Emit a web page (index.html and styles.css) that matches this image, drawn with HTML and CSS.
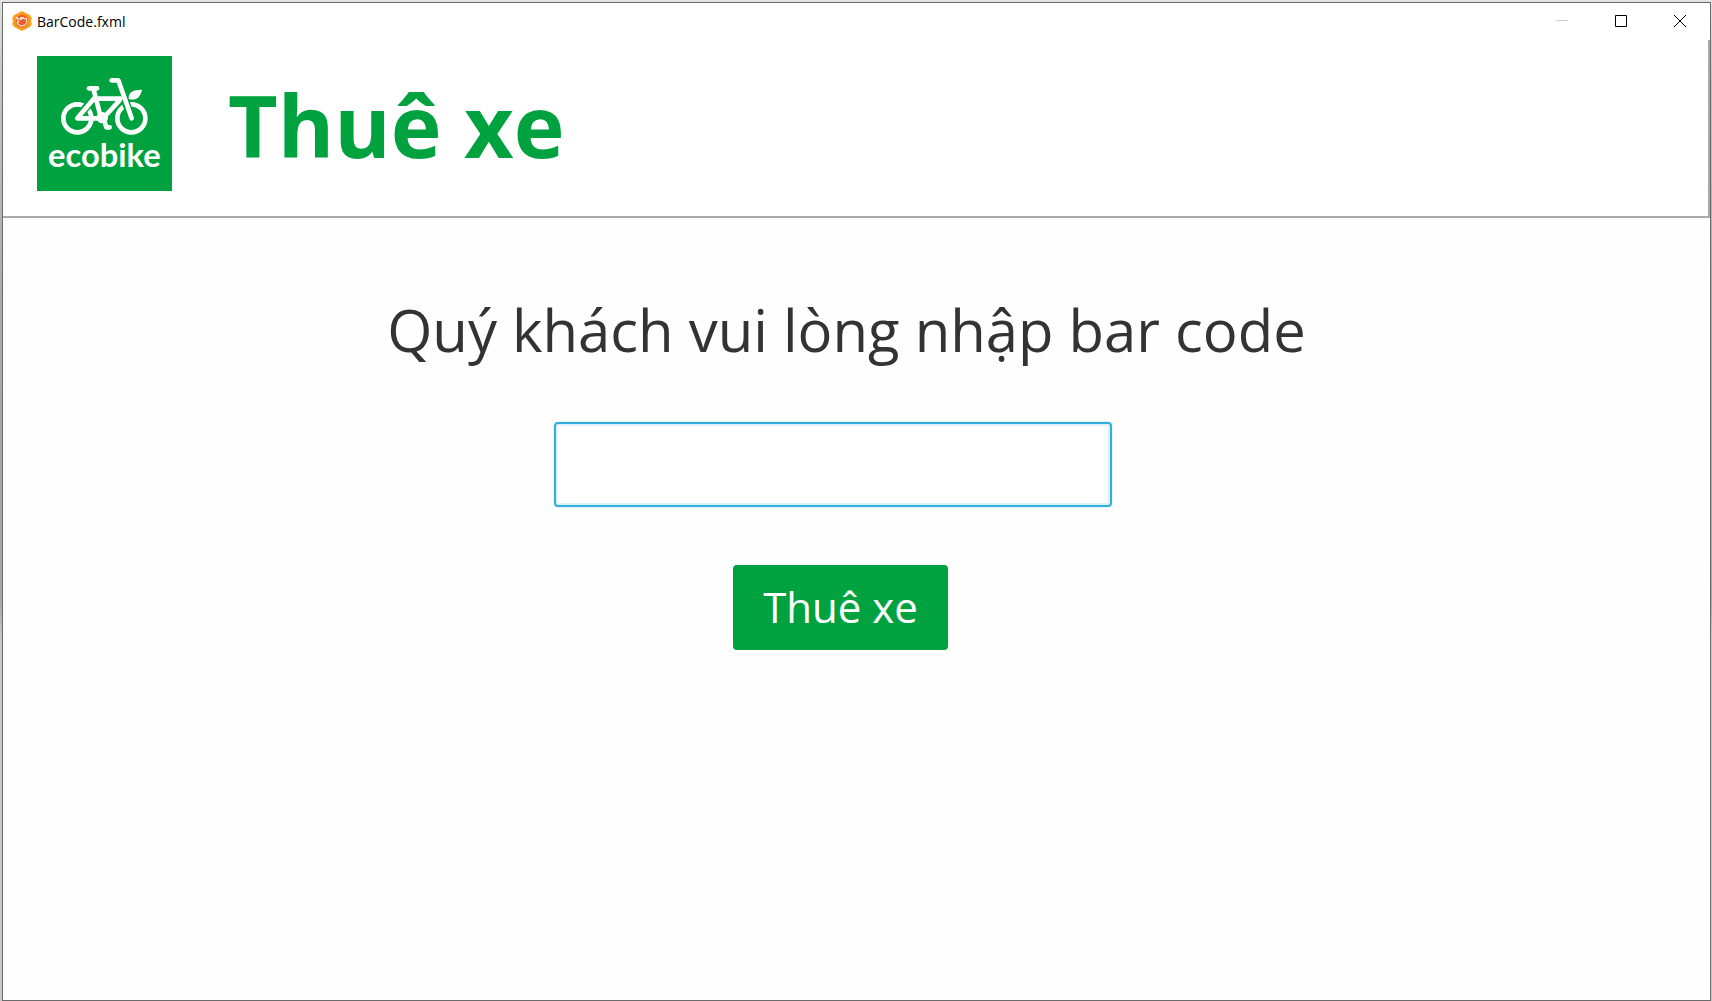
FILE: index.html
```html
<!DOCTYPE html>
<html lang="vi">
<head>
<meta charset="utf-8">
<meta name="viewport" content="width=device-width, initial-scale=1">
<title>BarCode.fxml</title>
<link rel="stylesheet" href="styles.css">
</head>
<body>
<div class="window">
  <div class="titlebar">
    <svg class="app-icon" viewBox="0 0 20 20" aria-hidden="true">
      <path fill="#f9a825" d="M10 0l4 2 4 2 2 3-1 3 1 3-2 3-4 2-4 2-4-2-4-2-2-3 1-3-1-3 2-3 4-2z"/>
      <circle cx="10" cy="10" r="8" fill="#f7931e"/>
      <circle cx="10" cy="10" r="6" fill="#f15a24"/>
      <path fill="none" stroke="#fff" stroke-width="1" stroke-linejoin="round" d="M4 6l5 3V6l1 2 1-2 1 2 2-1 1 4-2 3-4 1-3-2-1-2h2z"/>
    </svg>
    <span class="window-name">BarCode.fxml</span>
    <div class="controls">
      <button type="button" class="control" aria-label="Minimize" disabled><svg viewBox="0 0 12 12"><path d="M0 5.500h12" stroke="#ccc"/></svg></button>
      <button type="button" class="control" aria-label="Maximize"><svg viewBox="0 0 12 12"><path d="M.5.5h11v11H.5z" fill="none" stroke="#000"/></svg></button>
      <button type="button" class="control" aria-label="Close"><svg viewBox="0 0 12 12"><path d="M0 0l12 12M12 0L0 12" stroke="#000"/></svg></button>
    </div>
  </div>
  <header class="header">
    <svg class="logo" viewBox="0 0 405 405" role="img" aria-label="ecobike">
      <path fill="#00a23f" d="M0 0h405v405H0z"/>
      <g fill="none" stroke-linecap="round" stroke-linejoin="round">
        <g stroke="#fff" stroke-width="14">
          <circle cx="121" cy="187" r="42"/>
          <circle cx="283" cy="187" r="42"/>
        </g>
        <path stroke="#00a23f" stroke-width="24" stroke-linecap="butt" d="M133 171l40-47M258 116l20 56M244 138l-30 34"/>
        <g stroke="#fff" stroke-width="14">
          <path d="M156 97h24"/>
          <path d="M169 98l22 84M176 128h74M121 187l52-62M121 187h72M247 134l-48 52"/>
          <path d="M224 73h20l40 114"/>
          <path d="M200 188l8 26h10"/>
        </g>
      </g>
      <circle cx="196" cy="185" r="17" fill="#fff"/>
      <path fill="#fff" d="M275 129c-2-20 14-29 40-28-5 24-20 34-40 28z"/>
      <text class="logo-text" x="202" y="332" text-anchor="middle">ecobike</text>
    </svg>
    <h1 class="title">Thuê xe</h1>
  </header>
  <main class="content">
    <form class="form">
      <div class="row row-prompt"><label class="prompt" for="barcode">Quý khách vui lòng nhập bar code</label></div>
      <div class="row row-field"><input class="field" id="barcode" type="text"></div>
      <div class="row row-action"><button class="rent" type="button">Thuê xe</button></div>
    </form>
  </main>
</div>
</body>
</html>
```
FILE: styles.css
```css
* { box-sizing: border-box; }

body {
  margin: 0;
  min-height: 100vh;
  padding: 2px 1px 0 2px;
  display: flex;
  background: linear-gradient(#e2e2e2, #c4c4c4 8%, #aaa 30%, #a6a6a6 60%, #c8c8c8 64%, #c8c8c8);
  font-family: "Open Sans", "Noto Sans", sans-serif;
}

.window {
  flex: 1;
  display: flex;
  flex-direction: column;
  border: 1px solid #6b6b6b;
  background: #fefefe;
}

.titlebar {
  display: flex;
  align-items: flex-start;
  height: 37px;
  padding-left: 9px;
  background: #fff;
}

.app-icon { width: 20px; height: 20px; margin-top: 8px; }

.window-name {
  margin-left: 5px;
  font-size: 14px;
  line-height: 38px;
  color: #000;
}

.controls { display: flex; margin-left: auto; padding-right: 1px; }

.control {
  width: 59px;
  height: 36px;
  padding: 0;
  border: 0;
  background: none;
}

.control svg { display: block; width: 12px; height: 12px; margin: 0 auto; }

.header {
  display: flex;
  align-items: flex-start;
  height: 178px;
  padding: 16px 34px;
  border-right: 2px solid #aaa;
  border-bottom: 2px solid #aaa;
  background: #fff;
}

.logo { flex: none; width: 135px; height: 135px; }

.logo-text {
  font-family: Lato, sans-serif;
  font-weight: 700;
  font-size: 98px;
  fill: #fff;
}

.title {
  margin: 0 0 0 56px;
  font-size: 86px;
  font-weight: 700;
  line-height: 138px;
  color: #00a23f;
}

.content { flex: 1; padding-top: 72px; }

.row { display: flex; justify-content: center; }
.row-prompt { padding-right: 20px; }
.row-field { padding: 52px 48px 0 0; }
.row-action { padding: 58px 32px 0 0; }

.prompt {
  font-size: 58px;
  line-height: 80px;
  color: #333;
}

.field {
  width: 558px;
  height: 85px;
  padding: 0 16px;
  border: 2px solid #2fb0db;
  border-radius: 4px;
  outline: none;
  background: #fff;
  box-shadow: 0 0 0 1px #e6f5fb, inset 0 0 0 2px #e0f1f9;
  font: inherit;
  font-size: 44px;
}

.rent {
  width: 215px;
  height: 85px;
  padding: 0 0 2px;
  border: 0;
  border-radius: 4px;
  background: #00a23f;
  color: #fff;
  font: inherit;
  font-size: 42px;
}
```
